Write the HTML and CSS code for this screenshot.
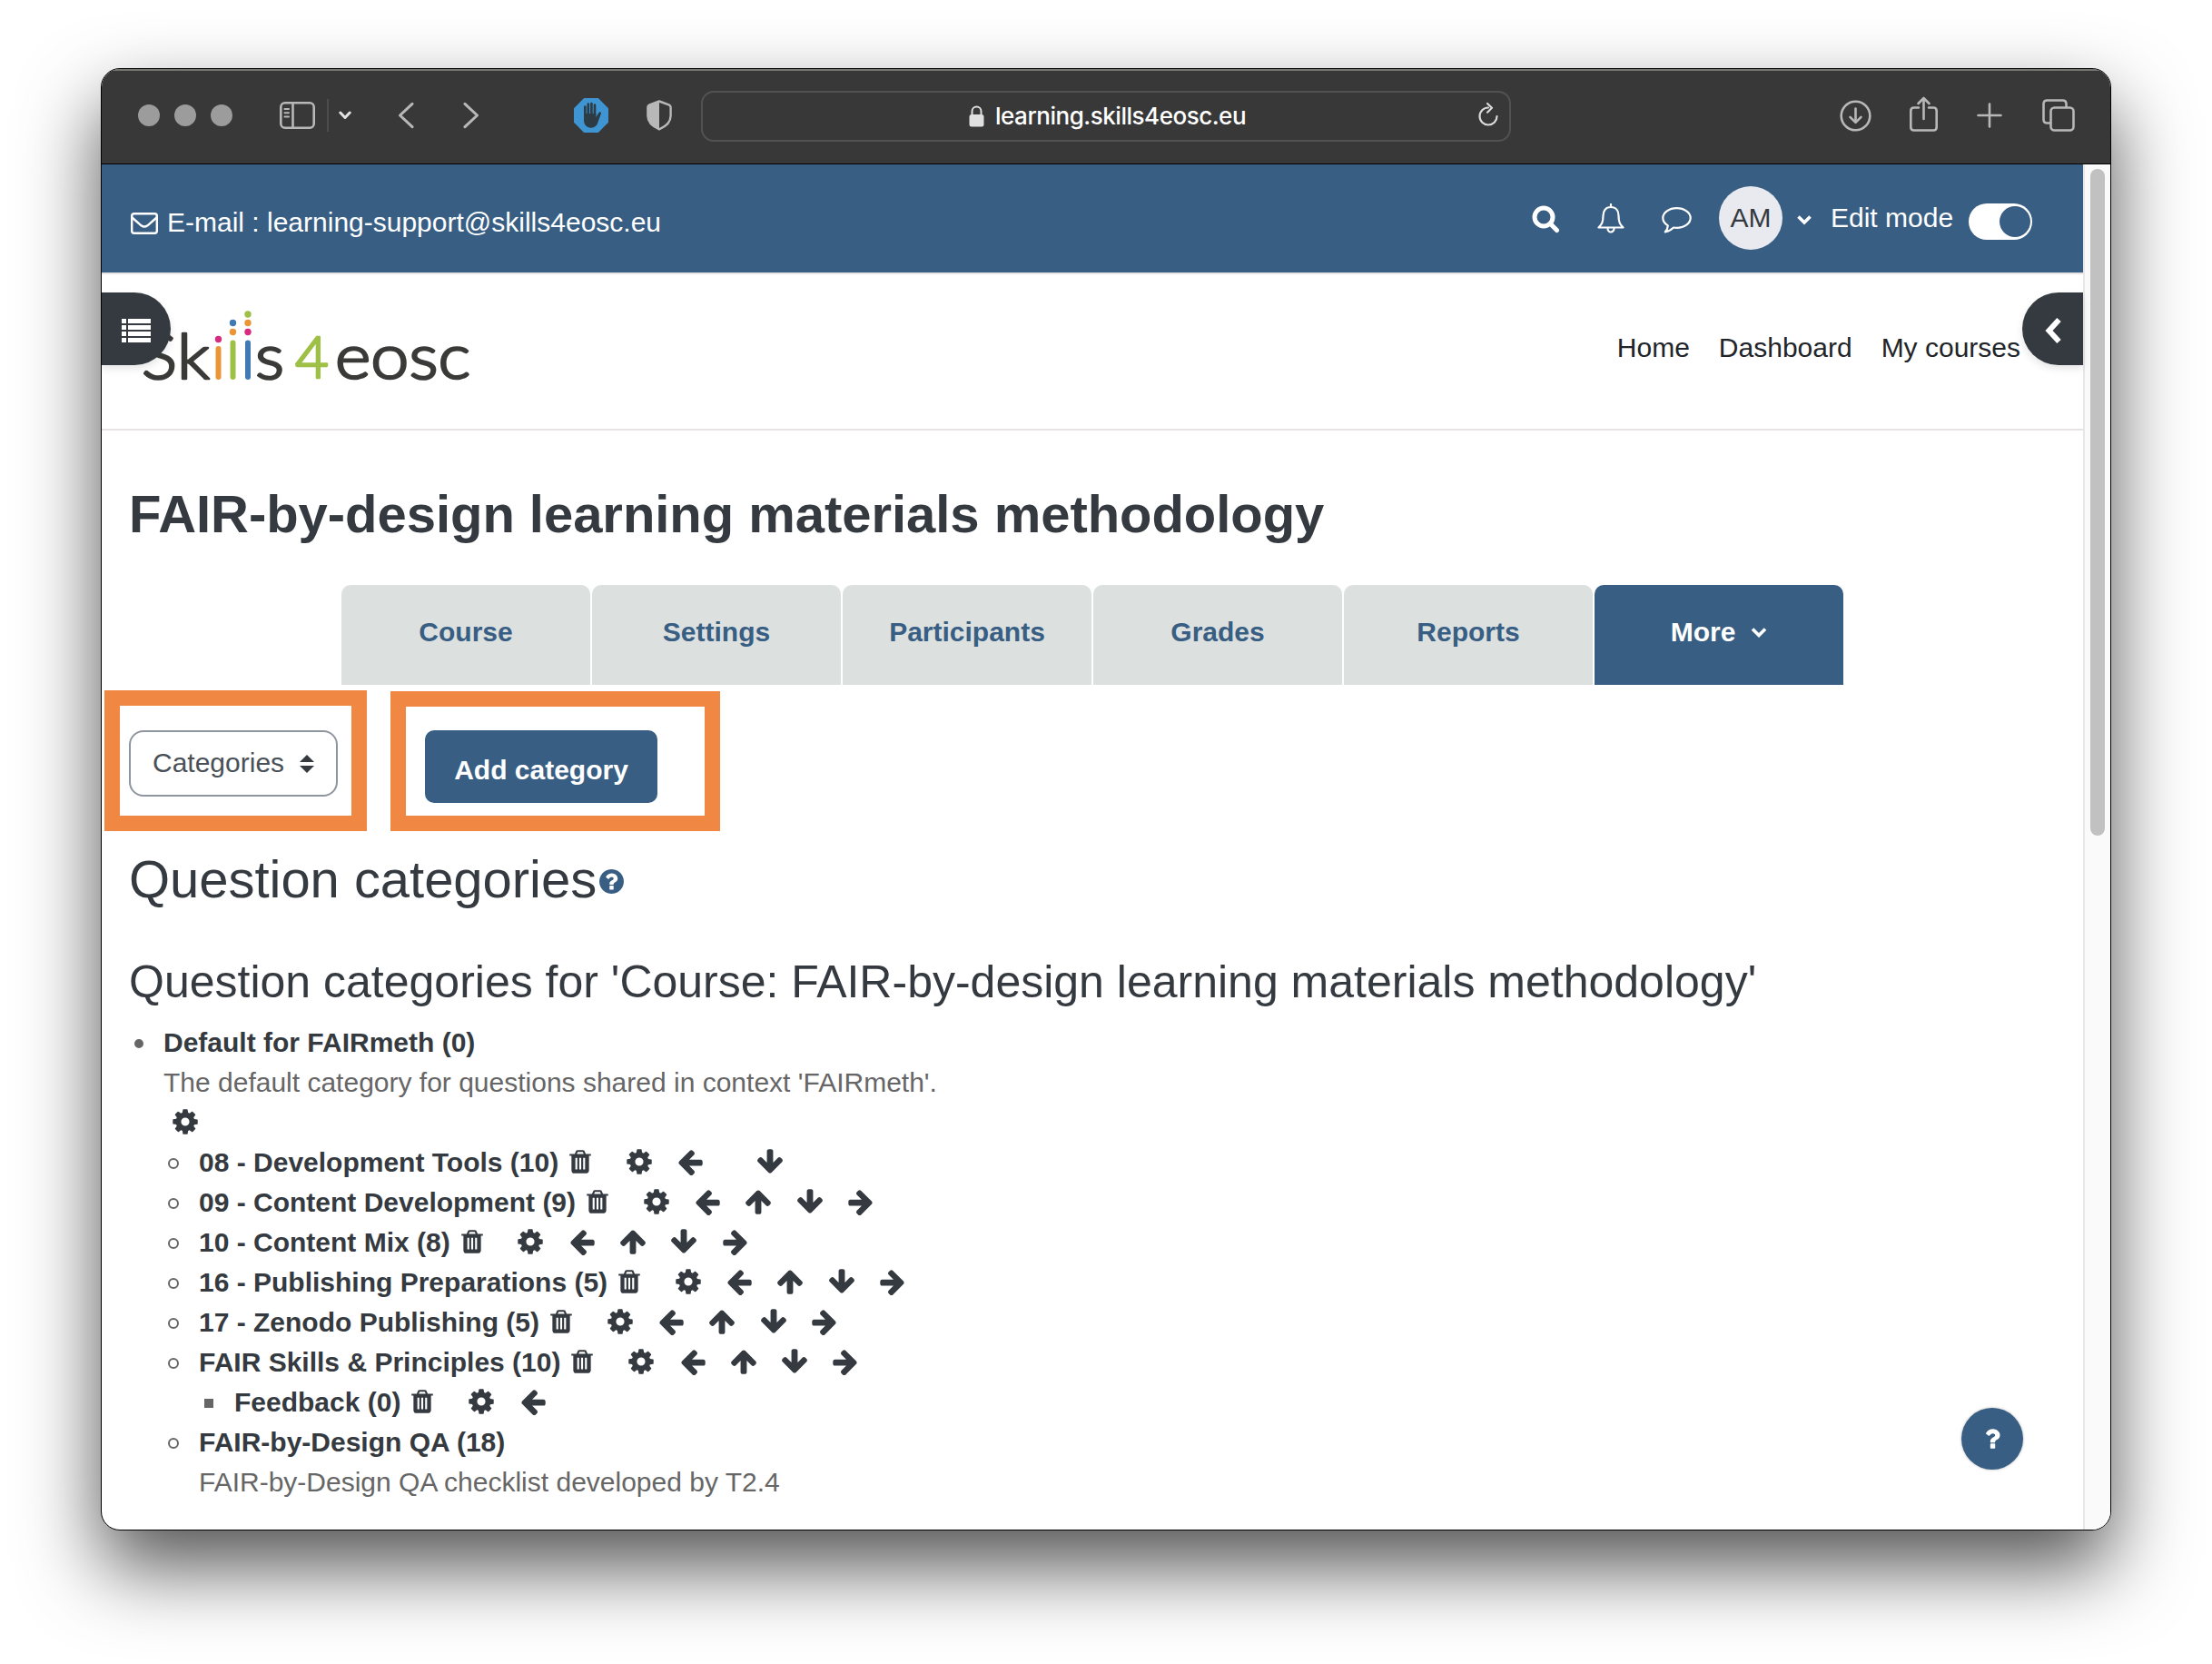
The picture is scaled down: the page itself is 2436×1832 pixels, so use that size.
FILE: index.html
```html
<!DOCTYPE html>
<html lang="en">
<head>
<meta charset="utf-8">
<title>FAIR-by-design learning materials methodology</title>
<link rel="stylesheet" href="styles.css">
</head>
<body>
<svg width="0" height="0" class="defs">
  <symbol id="cog" viewBox="0 0 1792 1792"><path d="M1152 896q0-106-75-181t-181-75-181 75-75 181 75 181 181 75 181-75 75-181zm512-109v222q0 12-8 23t-20 13l-185 28q-19 54-39 91 35 50 107 138 10 12 10 25t-9 23q-27 37-99 108t-94 71q-12 0-26-9l-138-108q-44 23-91 38-16 136-29 186-7 28-36 28h-222q-14 0-24.5-8.5t-11.5-21.5l-28-184q-49-16-90-37l-141 107q-10 9-25 9-14 0-25-11-126-114-165-168-7-10-7-23 0-12 8-23 15-21 51-66.5t54-70.5q-27-50-41-99l-183-27q-13-2-21-12.5t-8-23.5v-222q0-12 8-23t19-13l186-28q14-46 39-92-40-57-107-138-10-12-10-24 0-10 9-23 26-36 98.5-107.5t94.5-71.5q13 0 26 10l138 107q44-23 91-38 16-136 29-186 7-28 36-28h222q14 0 24.5 8.5t11.5 21.5l28 184q49 16 90 37l142-107q9-9 24-9 13 0 25 10 129 119 165 170 7 8 7 22 0 12-8 23-15 21-51 66.5t-54 70.5q26 50 41 98l183 28q13 2 21 12.5t8 23.5z"/></symbol>
  <symbol id="trash" viewBox="0 0 1792 1792"><path d="M704 1376v-704q0-14-9-23t-23-9h-64q-14 0-23 9t-9 23v704q0 14 9 23t23 9h64q14 0 23-9t9-23zm256 0v-704q0-14-9-23t-23-9h-64q-14 0-23 9t-9 23v704q0 14 9 23t23 9h64q14 0 23-9t9-23zm256 0v-704q0-14-9-23t-23-9h-64q-14 0-23 9t-9 23v704q0 14 9 23t23 9h64q14 0 23-9t9-23zm-544-992h448l-48-117q-7-9-17-11h-317q-10 2-17 11zm928 32v64q0 14-9 23t-23 9h-96v948q0 83-47 143.5t-113 60.5h-832q-66 0-113-58.5t-47-141.5v-952h-96q-14 0-23-9t-9-23v-64q0-14 9-23t23-9h309l70-167q15-37 54-63t79-26h320q40 0 79 26t54 63l70 167h309q14 0 23 9t9 23z"/></symbol>
  <symbol id="left" viewBox="0 0 1792 1792"><path d="M1664 896v128q0 53-32.5 90.5t-84.5 37.5h-704l293 294q38 36 38 90t-38 90l-75 76q-37 37-90 37-52 0-91-37l-651-652q-37-37-37-90 0-52 37-91l651-650q38-38 91-38 52 0 90 38l75 74q38 38 38 91t-38 91l-293 293h704q52 0 84.5 37.5t32.5 90.5z"/></symbol>
  <symbol id="right" viewBox="0 0 1792 1792"><path transform="matrix(-1 0 0 1 1792 0)" d="M1664 896v128q0 53-32.5 90.5t-84.5 37.5h-704l293 294q38 36 38 90t-38 90l-75 76q-37 37-90 37-52 0-91-37l-651-652q-37-37-37-90 0-52 37-91l651-650q38-38 91-38 52 0 90 38l75 74q38 38 38 91t-38 91l-293 293h704q52 0 84.5 37.5t32.5 90.5z"/></symbol>
  <symbol id="up" viewBox="0 0 1792 1792"><path d="M1675 971q0 51-37 90l-75 75q-38 38-91 38-54 0-90-38l-294-293v704q0 52-37.5 84.5t-90.5 32.5h-128q-53 0-90.5-32.5t-37.5-84.5v-704l-294 293q-36 38-90 38t-90-38l-75-75q-38-38-38-90 0-53 38-91l651-651q35-37 90-37 54 0 91 37l651 651q37 39 37 91z"/></symbol>
  <symbol id="down" viewBox="0 0 1792 1792"><path transform="matrix(1 0 0 -1 0 1792)" d="M1675 971q0 51-37 90l-75 75q-38 38-91 38-54 0-90-38l-294-293v704q0 52-37.5 84.5t-90.5 32.5h-128q-53 0-90.5-32.5t-37.5-84.5v-704l-294 293q-36 38-90 38t-90-38l-75-75q-38-38-38-90 0-53 38-91l651-651q35-37 90-37 54 0 91 37l651 651q37 39 37 91z"/></symbol>
  <symbol id="help" viewBox="128 128 1536 1536"><path d="M1024 1376v-192q0-14-9-23t-23-9h-192q-14 0-23 9t-9 23v192q0 14 9 23t23 9h192q14 0 23-9t9-23zm256-672q0-88-55.5-163t-138.5-116-170-41q-243 0-371 213-15 24 8 42l132 100q7 6 19 6 16 0 25-12 53-68 86-92 34-24 86-24 48 0 85.5 26t37.5 59q0 38-20 61t-68 45q-63 28-115.5 86.5t-52.5 125.5v36q0 14 9 23t23 9h192q14 0 23-9t9-23q0-19 21.5-49.5t54.5-49.5q32-18 49-28.5t46-35 44.5-48 28-60.5 12.5-81zm384 192q0 209-103 385.5t-279.5 279.5-385.5 103-385.5-103-279.5-279.5-103-385.5 103-385.5 279.5-279.5 385.5-103 385.5 103 279.5 279.5 103 385.5z"/></symbol>
  <symbol id="question" viewBox="0 0 1792 1792"><path d="M1088 1256v240q0 16-12 28t-28 12h-240q-16 0-28-12t-12-28v-240q0-16 12-28t28-12h240q16 0 28 12t12 28zm316-600q0 54-15.5 101t-35 76.5-55 59.5-57.5 43.5-61 35.5q-41 23-68.5 65t-27.5 67q0 17-12 32.5t-28 15.5h-240q-15 0-25.5-18.5t-10.5-37.5v-45q0-83 65-156.5t143-108.5q59-27 84-56t25-76q0-42-46.5-74t-107.5-32q-65 0-108 29-35 25-107 115-13 16-31 16-12 0-25-8l-164-125q-13-10-15.5-25t5.5-28q160-266 464-266 80 0 161 31t146 83 106 127.5 41 158.5z"/></symbol>
</svg>

<div class="window">
  <header class="toolbar">
    <div class="lights"><i></i><i></i><i></i></div>
    <svg class="ic sidebar" width="39" height="30" viewBox="0 0 39 30"><rect x="1.3" y="1.3" width="36.4" height="27.4" rx="4.5"/><path d="M14.5 1.5v27"/><path class="thin" d="M5.5 8h4.5M5.5 12.3h4.5M5.5 16.6h4.5"/></svg>
    <span class="divider"></span>
    <svg class="ic caret" width="14" height="10" viewBox="0 0 14 10"><path d="M1.8 2l5.2 5.5L12.2 2"/></svg>
    <svg class="ic back" width="18" height="30" viewBox="0 0 18 30"><path d="M16 2.3L2.5 15 16 27.7"/></svg>
    <svg class="ic forward" width="18" height="30" viewBox="0 0 18 30"><path d="M2 2.3L15.5 15 2 27.7"/></svg>
    <svg class="hand" width="38" height="38" viewBox="0 0 38 38"><path fill="#3f95d2" d="M11.2 0h15.600L38 11.200v15.600L26.800 38H11.200L0 26.800V11.200z"/><g fill="none" stroke="#2d3b45" stroke-width="2.600" stroke-linecap="round"><path d="M12.300 19V9.500M15.800 19V6.500M19.400 19V6M23 19V7.500"/></g><path fill="#2d3b45" d="M11 17h13.300v4l3.200-5c.8-1.200 2.800-.6 2.400 1l-3.400 9.500c-1.200 4-3.700 6.200-7.700 6.200-4.800 0-7.800-3.500-7.800-8.400z"/></svg>
    <svg class="shield" width="28" height="34" viewBox="0 0 28 34"><path fill="none" stroke="#b8b8b8" stroke-width="2.400" stroke-linejoin="round" d="M14 1.500l10.600 3.800q2 .8 2 2.800v9.500q0 9.500-12.600 14.800Q1.400 27.100 1.400 17.600V8.100q0-2 2-2.800z"/><path fill="#b8b8b8" d="M14 1.500v31Q1.400 27.100 1.400 17.600V8.100q0-2 2-2.800z"/></svg>
    <div class="address">
      <svg class="lock" width="17" height="24" viewBox="0 0 17 24"><rect x="0.500" y="10" width="16" height="13.500" rx="2.500" fill="#e0e0e0"/><path fill="none" stroke="#e0e0e0" stroke-width="2" d="M3.500 11V6.500a5 5 0 0 1 10 0V11"/></svg>
      <span class="url">learning.skills4eosc.eu</span>
      <svg class="reload" width="24" height="28" viewBox="0 0 24 28"><path d="M12 6.500A9.500 9.500 0 1 0 21.500 16M11 2l5 4.700-5 5"/></svg>
    </div>
    <svg class="ic download" width="35" height="35" viewBox="0 0 35 35"><circle cx="17.500" cy="17.500" r="15.800"/><path d="M17.500 9.500v15M11.500 18.800l6 6 6-6"/></svg>
    <svg class="ic share" width="31" height="39" viewBox="0 0 31 39"><path d="M10 12.500H4.800q-3.500 0-3.500 3.500v18q0 3.500 3.500 3.500h21.400q3.500 0 3.500-3.500V16q0-3.500-3.500-3.500H21M15.500 25V2.500M9.500 8l6-6 6 6"/></svg>
    <svg class="ic plus" width="28" height="28" viewBox="0 0 28 28"><path d="M14 1.500v25M1.500 14h25"/></svg>
    <svg class="ic tabsicon" width="36" height="36" viewBox="0 0 36 36"><rect x="9.500" y="9.500" width="25" height="25" rx="4"/><path d="M9 26.500H5.500q-4 0-4-4v-17q0-4 4-4h17q4 0 4 4V9"/></svg>
  </header>

  <div class="viewport">
    <div class="page">
      <div class="topbar">
        <svg width="30" height="24" viewBox="0 0 30 24" class="mail"><rect x="1.200" y="1.200" width="27.600" height="21.600" rx="2.500"/><path d="M1.500 5.500l10 8.800q3.500 2.600 7 0l10-8.800"/></svg>
        <span class="email">E-mail : learning-support@skills4eosc.eu</span>
        <div class="user">
          <svg class="search" width="31" height="31" viewBox="0 0 31 31"><circle cx="13" cy="13" r="10"/><path d="M20.500 20.500l7 7"/></svg>
          <svg class="line bell" width="30" height="34" viewBox="0 0 30 34"><path d="M15 1v3M15 4C9 4 6.500 8.500 6.500 13.500c0 7-1.500 9.500-5 13h27c-3.500-3.500-5-6-5-13C23.500 8.500 21 4 15 4z"/><path d="M11.500 27.500a3.500 4 0 0 0 7 0"/></svg>
          <svg class="line chat" width="33" height="29" viewBox="0 0 33 29"><path d="M16.500 1.200c8.400 0 15.200 4.900 15.200 10.800s-6.800 10.800-15.200 10.800c-1.200 0-2.300-.1-3.400-.3-2.700 2.700-5.600 4.300-9.300 4.900 1.500-1.500 2.700-3.500 3-7C3.500 18.400 1.300 15.400 1.300 12 1.300 6.100 8.100 1.200 16.500 1.200z"/></svg>
          <span class="avatar">AM</span>
          <svg class="chev" width="16" height="12" viewBox="0 0 16 12"><path d="M1.500 2.500L8 9l6.500-6.500"/></svg>
          <span class="mode">Edit mode</span>
          <span class="toggle"><i></i></span>
        </div>
      </div>

      <div class="brandbar">
        <span class="drawer drawer-left"><svg width="32" height="26" viewBox="0 0 32 26"><path fill="#fff" d="M0 0h5v5H0zM7 0h25v5H7zM0 7h5v5H0zM7 7h25v5H7zM0 14h5v5H0zM7 14h25v5H7zM0 21h5v5H0zM7 21h25v5H7z"/></svg></span>
        <svg class="logo" width="370" height="90" viewBox="0 0 370 90" role="img" aria-label="Skills4eosc">
          <g class="word">
            <text x="4" y="76" textLength="39" lengthAdjust="spacingAndGlyphs">S</text>
            <text x="43" y="76" textLength="36" lengthAdjust="spacingAndGlyphs">k</text>
            <text x="129" y="76" textLength="32" lengthAdjust="spacingAndGlyphs">s</text>
            <text x="173" y="75" textLength="37" lengthAdjust="spacingAndGlyphs" class="four">4</text>
            <text x="217" y="76" textLength="149" lengthAdjust="spacingAndGlyphs">eosc</text>
          </g>
          <g fill="none" stroke-width="6" stroke-linecap="round"><path stroke="#ea9636" d="M88.500 43v31"/><path stroke="#9fc046" d="M104.500 36.500V74"/><path stroke="#4179b3" d="M121 36.500V74"/></g>
          <g fill="#d92b7e"><circle cx="88.500" cy="32.500" r="3.700"/><circle cx="121" cy="24.500" r="3.700"/></g>
          <g fill="#ea9636"><circle cx="104.500" cy="24.500" r="3.700"/><circle cx="121" cy="14.500" r="3.700"/></g>
          <circle cx="104.500" cy="14.500" r="3.700" fill="#4179b3"/><circle cx="121" cy="5" r="3.700" fill="#9fc046"/>
        </svg>
        <nav class="links"><a>Home</a><a>Dashboard</a><a>My courses</a></nav>
        <span class="drawer drawer-right"><svg width="18" height="30" viewBox="0 0 18 30"><path fill="none" stroke="#fff" stroke-width="6" stroke-linejoin="miter" d="M15.500 3L4.500 15l11 12"/></svg></span>
      </div>

      <main class="content">
        <h1>FAIR-by-design learning materials methodology</h1>
        <nav class="tabs">
          <a>Course</a><a>Settings</a><a>Participants</a><a>Grades</a><a>Reports</a>
          <a class="active">More <svg class="chev" width="18" height="12" viewBox="0 0 18 12"><path d="M2 2.500l7 7 7-7"/></svg></a>
        </nav>
        <div class="controls">
          <div class="frame frame-select">
            <div class="select">Categories <svg width="16" height="20" viewBox="0 0 16 20"><path fill="#343a40" d="M8 0l8 8H0zM8 20l8-8H0z"/></svg></div>
          </div>
          <div class="frame frame-add"><div class="button">Add category</div></div>
        </div>
        <h2>Question categories<svg class="help"><use href="#help"/></svg></h2>
        <h3>Question categories for 'Course: FAIR-by-design learning materials methodology'</h3>
        <ul class="tree">
          <li class="disc"><b>Default for FAIRmeth (0)</b>
            <p>The default category for questions shared in context 'FAIRmeth'.</p>
            <div class="line only"><svg class="act"><use href="#cog"/></svg></div>
            <ul>
              <li><div class="line"><b>08 - Development Tools (10)</b><svg class="act bin"><use href="#trash"/></svg><svg class="act"><use href="#cog"/></svg><svg class="act"><use href="#left"/></svg><svg class="act skip"><use href="#down"/></svg></div></li>
              <li><div class="line"><b>09 - Content Development (9)</b><svg class="act bin"><use href="#trash"/></svg><svg class="act"><use href="#cog"/></svg><svg class="act"><use href="#left"/></svg><svg class="act"><use href="#up"/></svg><svg class="act"><use href="#down"/></svg><svg class="act"><use href="#right"/></svg></div></li>
              <li><div class="line"><b>10 - Content Mix (8)</b><svg class="act bin"><use href="#trash"/></svg><svg class="act"><use href="#cog"/></svg><svg class="act"><use href="#left"/></svg><svg class="act"><use href="#up"/></svg><svg class="act"><use href="#down"/></svg><svg class="act"><use href="#right"/></svg></div></li>
              <li><div class="line"><b>16 - Publishing Preparations (5)</b><svg class="act bin"><use href="#trash"/></svg><svg class="act"><use href="#cog"/></svg><svg class="act"><use href="#left"/></svg><svg class="act"><use href="#up"/></svg><svg class="act"><use href="#down"/></svg><svg class="act"><use href="#right"/></svg></div></li>
              <li><div class="line"><b>17 - Zenodo Publishing (5)</b><svg class="act bin"><use href="#trash"/></svg><svg class="act"><use href="#cog"/></svg><svg class="act"><use href="#left"/></svg><svg class="act"><use href="#up"/></svg><svg class="act"><use href="#down"/></svg><svg class="act"><use href="#right"/></svg></div></li>
              <li><div class="line"><b>FAIR Skills &amp; Principles (10)</b><svg class="act bin"><use href="#trash"/></svg><svg class="act"><use href="#cog"/></svg><svg class="act"><use href="#left"/></svg><svg class="act"><use href="#up"/></svg><svg class="act"><use href="#down"/></svg><svg class="act"><use href="#right"/></svg></div>
                <ul>
                  <li class="square"><div class="line"><b>Feedback (0)</b><svg class="act bin"><use href="#trash"/></svg><svg class="act"><use href="#cog"/></svg><svg class="act"><use href="#left"/></svg></div></li>
                </ul>
              </li>
              <li><div class="line"><b>FAIR-by-Design QA (18)</b></div><p>FAIR-by-Design QA checklist developed by T2.4</p></li>
            </ul>
          </li>
        </ul>
        <span class="fab"><svg width="30" height="30"><use href="#question"/></svg></span>
      </main>
    </div>
    <div class="scrollbar"><span></span></div>
  </div>
</div>
</body>
</html>
```
FILE: styles.css
```css
*, *::before { box-sizing: border-box; }
body {
  margin: 0;
  width: 2436px;
  height: 1832px;
  padding: 75px 111px 0;
  overflow: hidden;
  background: #fff;
  color: #343a40;
  font: 30px/44px "Liberation Sans", Arial, sans-serif;
}
svg { display: block; flex: none; }
.defs { position: absolute; }

.window {
  width: 2214px;
  height: 1610px;
  border: 1px solid #000;
  border-radius: 21px;
  overflow: hidden;
  background: #fff;
  box-shadow: 0 40px 86px rgba(0, 0, 0, .68);
  display: flex;
  flex-direction: column;
}

/* Browser toolbar */
.toolbar {
  height: 105px;
  flex: none;
  display: flex;
  align-items: center;
  padding: 0 39px 2px 40px;
  background: #383838;
  border-bottom: 1px solid #000;
  box-shadow: inset 0 2px 0 #74766f;
}
.lights { display: flex; gap: 16px; }
.lights i { width: 24px; height: 24px; border-radius: 50%; background: #9c9c9c; }
.ic { fill: none; stroke: #b8b8b8; stroke-width: 2.6; stroke-linecap: round; stroke-linejoin: round; }
.thin { stroke-width: 2; }
.sidebar { margin-left: 52px; }
.divider { width: 2px; height: 36px; margin-left: 13px; background: #4d4d4d; }
.caret { margin-left: 11px; stroke: #e3e3e3; stroke-width: 3; }
.back { margin-left: 51px; stroke-width: 3; }
.forward { margin-left: 54px; stroke-width: 3; }
.hand { margin-left: 104px; }
.shield { margin-left: 42px; }
.address {
  width: 892px;
  height: 56px;
  margin: 2px 0 0 32px;
  border: 2px solid #525252;
  border-radius: 14px;
  display: flex;
  align-items: center;
  padding: 0 11px 0 293px;
  color: #fff;
  font: 500 26px/52px Inter, sans-serif;
}
.url { letter-spacing: -.48px; }
.lock { margin: 0 12px 1px 0; }
.reload { margin: 0 0 4px auto; fill: none; stroke: #dadada; stroke-width: 2.2; stroke-linecap: round; stroke-linejoin: round; }
.download { margin-left: 362px; }
.share { margin-left: 42px; margin-bottom: 4px; }
.plus { margin-left: 43px; }
.tabsicon { margin-left: auto; }

.viewport { flex: 1; display: flex; min-height: 0; }
.page { width: 2182px; flex: none; position: relative; }
.scrollbar {
  flex: 1;
  border-left: 2px solid #e7e7e7;
  background: #fafafa;
  padding: 5px 6px;
}
.scrollbar span { display: block; width: 16px; height: 734px; border-radius: 8px; background: #c1c1c1; }

/* Site header */
.topbar {
  height: 119px;
  padding: 0 56px 0 32px;
  background: #385e83;
  color: #fff;
  display: flex;
  align-items: center;
}
.mail { fill: none; stroke: #fff; stroke-width: 2.4; margin-top: 10px; }
.email { margin: 9px 0 0 10px; }
.user { margin-left: auto; display: flex; align-items: center; margin-top: -2px; }
.search { fill: none; stroke: #fff; stroke-width: 5; stroke-linecap: round; margin-right: 41px; margin-top: 4px; }
.line { fill: none; }
svg.line { stroke: #fff; stroke-width: 2.2; stroke-linejoin: round; stroke-linecap: round; }
.bell { margin-right: 41px; margin-top: 3px; }
.chat { margin-right: 30px; margin-top: 6px; }
.avatar {
  width: 70px;
  height: 70px;
  border-radius: 50%;
  background: #e9eaef;
  color: #343a40;
  display: flex;
  align-items: center;
  justify-content: center;
}
.chev { fill: none; stroke: currentColor; stroke-width: 3.6; }
.topbar .chev { margin: 4px 21px 0 16px; }
.mode { width: 152px; }
.toggle {
  width: 70px;
  height: 40px;
  border-radius: 20px;
  background: #fff;
  display: flex;
  justify-content: flex-end;
  padding: 3px 2px;
  margin-top: 9px;
}
.toggle i { width: 34px; height: 34px; border-radius: 50%; background: #385e83; }

.brandbar {
  position: relative;
  height: 174px;
  border: solid #e7e3e5;
  border-width: 2px 0;
  display: flex;
  align-items: flex-start;
}
.logo { margin: 39px 0 0 40px; }
.word text {
  font: 300 69px Lato, sans-serif;
  fill: #3a3a38;
  stroke: #3a3a38;
  stroke-width: 2.6;
  stroke-linejoin: round;
}
.word .four { font-size: 64px; fill: #9fc046; stroke: #9fc046; }
.links { display: flex; gap: 32px; margin: 59px 69px 0 auto; color: #212529; }
.drawer {
  position: absolute;
  top: 20px;
  height: 80px;
  background: #343a40;
  display: flex;
  align-items: center;
  box-shadow: 0 4px 8px rgba(0, 0, 0, .1);
}
.drawer-left { left: 0; width: 76px; padding: 3px 0 0 22px; border-radius: 0 40px 40px 0; }
.drawer-right { right: 0; width: 67px; padding: 3px 0 0 25px; border-radius: 40px 0 0 40px; }

/* Course content */
.content { padding: 57px 30px 0; display: flex; flex-direction: column; }
h1, h2, h3, p, ul { margin: 0; padding: 0; }
h1 { font-size: 58px; line-height: 70px; font-weight: 700; letter-spacing: -.04px; }
.tabs { display: flex; gap: 2px; margin: 43px 0 0 234px; }
.tabs a {
  width: 274px;
  height: 110px;
  padding-bottom: 6px;
  border-radius: 10px 10px 0 0;
  background: #dce0df;
  color: #385e83;
  font-weight: 700;
  display: flex;
  align-items: center;
  justify-content: center;
}
.tabs .active { background: #385e83; color: #fff; gap: 17px; }
.controls { display: flex; align-items: flex-end; gap: 26px; margin: 6px 0 0 -27px; }
.frame { border: 17px solid #f08742; }
.frame-select { width: 289px; height: 155px; padding: 27px 0 0 10px; }
.frame-add { width: 363px; height: 154px; padding: 26px 0 0 21px; }
.select {
  width: 230px;
  height: 73px;
  border: 2px solid #8f959e;
  border-radius: 16px;
  padding: 0 24px 2px;
  color: #495057;
  display: flex;
  align-items: center;
  justify-content: space-between;
}
.select svg { margin-top: 2px; }
.button {
  width: 256px;
  height: 80px;
  border-radius: 10px;
  background: #385e83;
  color: #fff;
  font-weight: 700;
  text-align: center;
  line-height: 87px;
}
h2 { font-size: 58px; line-height: 70px; font-weight: 400; margin-top: 18px; letter-spacing: -.04px; display: flex; align-items: center; }
.help { width: 27px; height: 27px; margin: 5px 0 0 3px; fill: #385e83; }
h3 { font-size: 50px; line-height: 60px; font-weight: 400; margin-top: 48px; white-space: nowrap; }
.tree { margin: 15px 0 0 38px; }
ul { list-style: none; }
li { position: relative; }
li li { margin-left: 39px; }
li::before {
  content: "";
  position: absolute;
  left: -34px;
  top: 17px;
  width: 12px;
  height: 12px;
  border: 2px solid #666;
  border-radius: 50%;
}
.disc::before { left: -32px; top: 18px; width: 10px; height: 10px; background: #666; }
.square::before { border-radius: 0; width: 10px; height: 10px; left: -33px; top: 18px; background: #666; }
.tree b { color: #343a40; }
p { color: #666; }
.line { display: flex; align-items: center; height: 44px; }
svg.line { height: auto; }
.act { width: 32px; height: 32px; margin: 0 0 2px 24.3px; fill: #343a40; }
.only .act { margin-left: 8px; }
.bin { width: 30px; height: 30px; margin: 0 9.500px 2px 9px; }
.skip { margin-left: 56px; }
.fab {
  position: absolute;
  right: 66px;
  bottom: 66px;
  width: 68px;
  height: 68px;
  border-radius: 50%;
  background: #385e83;
  fill: #fff;
  display: flex;
  align-items: center;
  justify-content: center;
  box-shadow: 0 0 3px rgba(0, 0, 0, .3);
}
```
